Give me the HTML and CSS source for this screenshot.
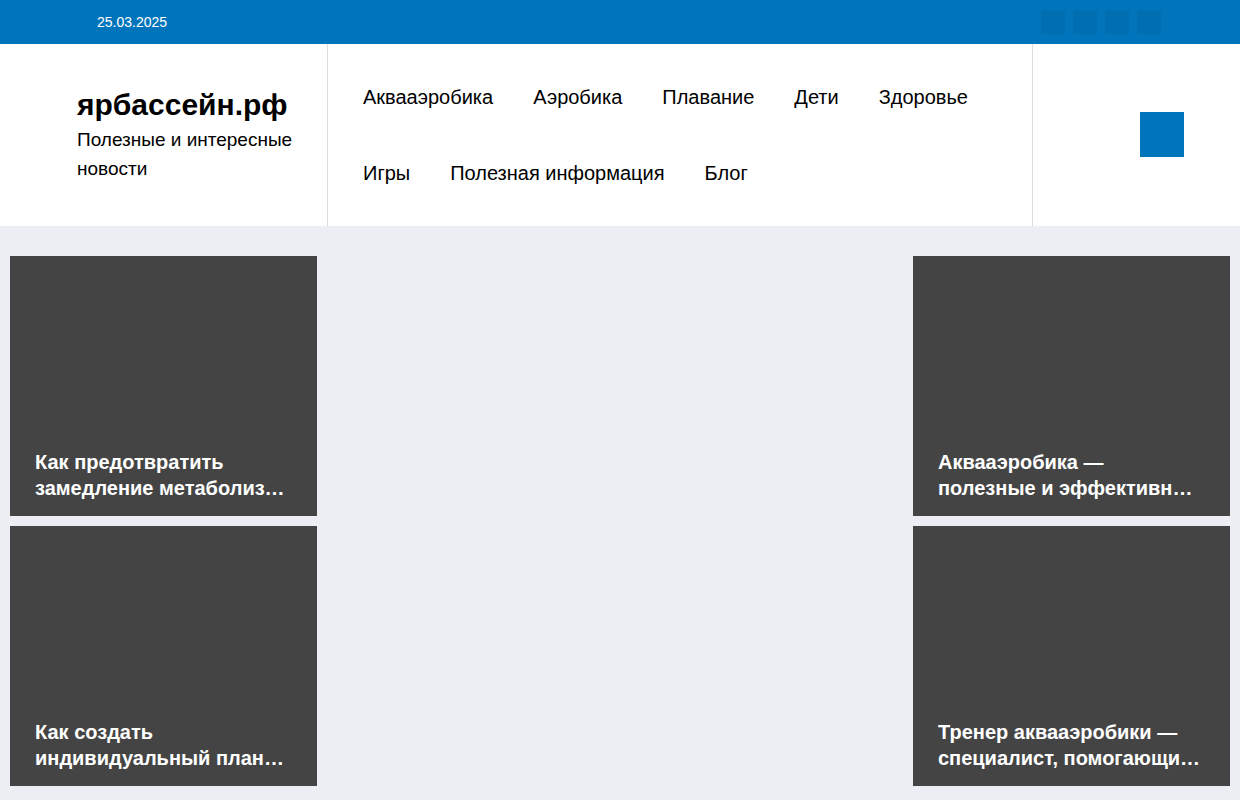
FILE: index.html
```html
<!DOCTYPE html>
<html lang="ru">
<head>
<meta charset="utf-8">
<title>ярбассейн.рф</title>
<link rel="stylesheet" href="styles.css">
</head>
<body>
<div class="topbar">
  <div class="date">25.03.2025</div>
  <div class="socials">
    <span class="soc"></span><span class="soc"></span><span class="soc"></span><span class="soc"></span>
  </div>
</div>
<header class="header">
  <div class="brand">
    <div class="logo">ярбассейн.рф</div>
    <div class="tagline">Полезные и интересные новости</div>
  </div>
  <nav class="nav">
    <a href="#">Аквааэробика</a>
    <a href="#">Аэробика</a>
    <a href="#">Плавание</a>
    <a href="#">Дети</a>
    <a href="#">Здоровье</a>
    <a href="#">Игры</a>
    <a href="#">Полезная информация</a>
    <a href="#">Блог</a>
  </nav>
  <div class="side">
    <span class="search-btn"></span>
  </div>
</header>
<main class="content">
  <div class="col">
    <div class="card"><div class="card-title">Как предотвратить замедление метаболиз…</div></div>
    <div class="card"><div class="card-title">Как создать индивидуальный план…</div></div>
  </div>
  <div class="mid"></div>
  <div class="col">
    <div class="card"><div class="card-title">Аквааэробика — полезные и эффективн…</div></div>
    <div class="card"><div class="card-title">Тренер аквааэробики — специалист, помогающи…</div></div>
  </div>
</main>
</body>
</html>
```

FILE: styles.css
```css
* { box-sizing: border-box; }
html, body { margin: 0; padding: 0; }
body {
  font-family: "Liberation Sans", Arial, sans-serif;
  background: #edeef3;
  color: #000;
}
.topbar {
  height: 44px;
  background: #0075bb;
  display: flex;
  align-items: center;
  justify-content: space-between;
  padding: 0 79px 0 97px;
}
.date {
  color: #fff;
  font-size: 14px;
}
.socials {
  display: flex;
  gap: 8px;
}
.soc {
  width: 24px;
  height: 24px;
  background: #006fb1;
  display: block;
}
.header {
  height: 182px;
  background: #fff;
  display: flex;
}
.brand {
  width: 328px;
  border-right: 1px solid #dddddd;
  padding: 42px 30px 0 77px;
}
.logo {
  font-size: 30px;
  font-weight: bold;
  line-height: 38px;
}
.tagline {
  font-size: 19px;
  line-height: 29px;
  margin-top: 1px;
}
.nav {
  width: 705px;
  border-right: 1px solid #dddddd;
  padding: 34px 30px 0 35px;
  display: flex;
  flex-wrap: wrap;
  align-content: flex-start;
  column-gap: 40px;
}
.nav a {
  color: #000;
  text-decoration: none;
  font-size: 20px;
  line-height: 76px;
  height: 76px;
  margin-top: -19px;
  margin-bottom: 19px;
}
.side {
  flex: 1;
  display: flex;
  justify-content: flex-end;
  align-items: flex-start;
  padding: 68px 56px 0 0;
}
.search-btn {
  width: 44px;
  height: 45px;
  background: #0075bb;
  display: block;
}
.content {
  display: grid;
  grid-template-columns: 307px 1fr 317px;
  padding: 30px 10px 14px 10px;
}
.col {
  display: flex;
  flex-direction: column;
  gap: 10px;
}
.card {
  height: 260px;
  background: #444444;
  display: flex;
  align-items: flex-end;
  padding: 0 25px 15px 25px;
}
.card-title {
  color: #fff;
  font-size: 20px;
  font-weight: bold;
  line-height: 26px;
}
```
